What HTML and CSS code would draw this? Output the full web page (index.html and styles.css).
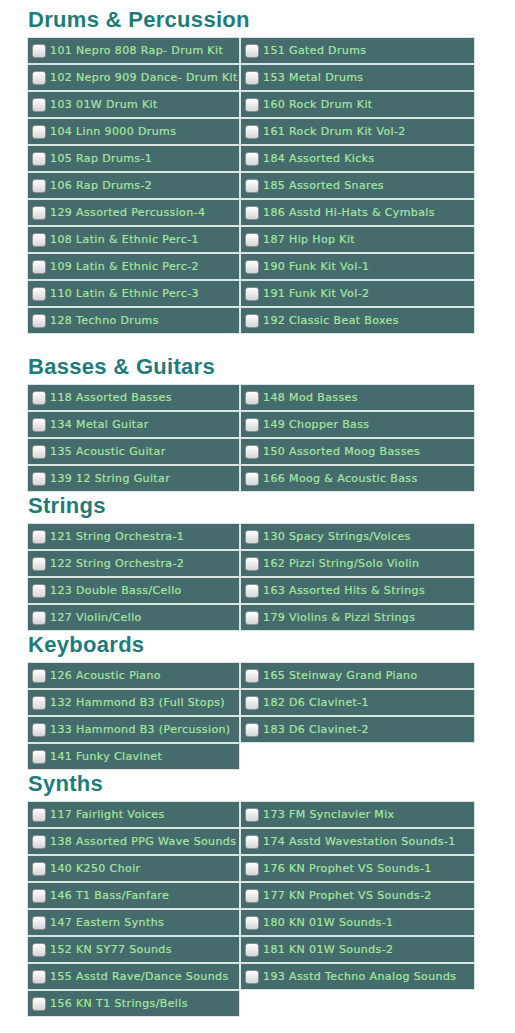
FILE: index.html
```html
<!DOCTYPE html>
<html lang="en">
<head>
<meta charset="utf-8">
<title>Sound Libraries</title>
<link rel="stylesheet" href="styles.css">
</head>
<body>
<div class="page">

<h2 class="cat">Drums &amp; Percussion</h2>
<table class="grid">
<colgroup><col class="col-l"><col class="col-r"></colgroup>
<tr><td><label><input type="checkbox">101 Nepro 808 Rap- Drum Kit</label></td><td><label><input type="checkbox">151 Gated Drums</label></td></tr>
<tr><td><label><input type="checkbox">102 Nepro 909 Dance- Drum Kit</label></td><td><label><input type="checkbox">153 Metal Drums</label></td></tr>
<tr><td><label><input type="checkbox">103 01W Drum Kit</label></td><td><label><input type="checkbox">160 Rock Drum Kit</label></td></tr>
<tr><td><label><input type="checkbox">104 Linn 9000 Drums</label></td><td><label><input type="checkbox">161 Rock Drum Kit Vol-2</label></td></tr>
<tr><td><label><input type="checkbox">105 Rap Drums-1</label></td><td><label><input type="checkbox">184 Assorted Kicks</label></td></tr>
<tr><td><label><input type="checkbox">106 Rap Drums-2</label></td><td><label><input type="checkbox">185 Assorted Snares</label></td></tr>
<tr><td><label><input type="checkbox">129 Assorted Percussion-4</label></td><td><label><input type="checkbox">186 Asstd Hi-Hats &amp; Cymbals</label></td></tr>
<tr><td><label><input type="checkbox">108 Latin &amp; Ethnic Perc-1</label></td><td><label><input type="checkbox">187 Hip Hop Kit</label></td></tr>
<tr><td><label><input type="checkbox">109 Latin &amp; Ethnic Perc-2</label></td><td><label><input type="checkbox">190 Funk Kit Vol-1</label></td></tr>
<tr><td><label><input type="checkbox">110 Latin &amp; Ethnic Perc-3</label></td><td><label><input type="checkbox">191 Funk Kit Vol-2</label></td></tr>
<tr><td><label><input type="checkbox">128 Techno Drums</label></td><td><label><input type="checkbox">192 Classic Beat Boxes</label></td></tr>
</table>

<h2 class="cat cat--spaced">Basses &amp; Guitars</h2>
<table class="grid">
<colgroup><col class="col-l"><col class="col-r"></colgroup>
<tr><td><label><input type="checkbox">118 Assorted Basses</label></td><td><label><input type="checkbox">148 Mod Basses</label></td></tr>
<tr><td><label><input type="checkbox">134 Metal Guitar</label></td><td><label><input type="checkbox">149 Chopper Bass</label></td></tr>
<tr><td><label><input type="checkbox">135 Acoustic Guitar</label></td><td><label><input type="checkbox">150 Assorted Moog Basses</label></td></tr>
<tr><td><label><input type="checkbox">139 12 String Guitar</label></td><td><label><input type="checkbox">166 Moog &amp; Acoustic Bass</label></td></tr>
</table>

<h2 class="cat">Strings</h2>
<table class="grid">
<colgroup><col class="col-l"><col class="col-r"></colgroup>
<tr><td><label><input type="checkbox">121 String Orchestra-1</label></td><td><label><input type="checkbox">130 Spacy Strings/Voices</label></td></tr>
<tr><td><label><input type="checkbox">122 String Orchestra-2</label></td><td><label><input type="checkbox">162 Pizzi String/Solo Violin</label></td></tr>
<tr><td><label><input type="checkbox">123 Double Bass/Cello</label></td><td><label><input type="checkbox">163 Assorted Hits &amp; Strings</label></td></tr>
<tr><td><label><input type="checkbox">127 Violin/Cello</label></td><td><label><input type="checkbox">179 Violins &amp; Pizzi Strings</label></td></tr>
</table>

<h2 class="cat">Keyboards</h2>
<table class="grid">
<colgroup><col class="col-l"><col class="col-r"></colgroup>
<tr><td><label><input type="checkbox">126 Acoustic Piano</label></td><td><label><input type="checkbox">165 Steinway Grand Piano</label></td></tr>
<tr><td><label><input type="checkbox">132 Hammond B3 (Full Stops)</label></td><td><label><input type="checkbox">182 D6 Clavinet-1</label></td></tr>
<tr><td><label><input type="checkbox">133 Hammond B3 (Percussion)</label></td><td><label><input type="checkbox">183 D6 Clavinet-2</label></td></tr>
<tr><td><label><input type="checkbox">141 Funky Clavinet</label></td></tr>
</table>

<h2 class="cat">Synths</h2>
<table class="grid">
<colgroup><col class="col-l"><col class="col-r"></colgroup>
<tr><td><label><input type="checkbox">117 Fairlight Voices</label></td><td><label><input type="checkbox">173 FM Synclavier Mix</label></td></tr>
<tr><td><label><input type="checkbox">138 Assorted PPG Wave Sounds</label></td><td><label><input type="checkbox">174 Asstd Wavestation Sounds-1</label></td></tr>
<tr><td><label><input type="checkbox">140 K250 Choir</label></td><td><label><input type="checkbox">176 KN Prophet VS Sounds-1</label></td></tr>
<tr><td><label><input type="checkbox">146 T1 Bass/Fanfare</label></td><td><label><input type="checkbox">177 KN Prophet VS Sounds-2</label></td></tr>
<tr><td><label><input type="checkbox">147 Eastern Synths</label></td><td><label><input type="checkbox">180 KN 01W Sounds-1</label></td></tr>
<tr><td><label><input type="checkbox">152 KN SY77 Sounds</label></td><td><label><input type="checkbox">181 KN 01W Sounds-2</label></td></tr>
<tr><td><label><input type="checkbox">155 Asstd Rave/Dance Sounds</label></td><td><label><input type="checkbox">193 Asstd Techno Analog Sounds</label></td></tr>
<tr><td><label><input type="checkbox">156 KN T1 Strings/Bells</label></td></tr>
</table>

</div>
</body>
</html>
```

FILE: styles.css
```css
html, body {
  margin: 0;
  padding: 0;
  background: #ffffff;
}

.page {
  padding: 6px 0 0 27px;
}

.cat {
  margin: 0;
  padding: 0 0 3px 1px;
  height: 28px;
  line-height: 28px;
  font-family: "Liberation Sans", Arial, sans-serif;
  font-weight: bold;
  font-size: 22px;
  letter-spacing: 0.3px;
  color: #1f7b7a;
}

.cat--spaced {
  margin-top: 19px;
}

.grid {
  border-collapse: separate;
  border-spacing: 0;
  table-layout: fixed;
  width: 448px;
}

.col-l {
  width: 213px;
}

.col-r {
  width: 235px;
}

.grid td {
  padding: 0 0 0 4px;
  background: #466b6c;
  border: 1px solid #dde4e4;
  box-sizing: border-box;
  height: 27px;
  vertical-align: middle;
  white-space: nowrap;
  overflow: hidden;
}

.grid label {
  display: flex;
  align-items: center;
  gap: 4px;
  font-family: "DejaVu Sans", Verdana, sans-serif;
  font-size: 11px;
  letter-spacing: 0.38px;
  color: #a4e8a0;
  -webkit-text-stroke: 0.2px #a4e8a0;
}

.grid input {
  appearance: none;
  -webkit-appearance: none;
  margin: 0;
  flex: none;
  width: 14px;
  height: 14px;
  border: 1px solid #8a8f92;
  border-radius: 3px;
  background: linear-gradient(#ffffff, #e6e6e6 60%, #d4d4d4);
  box-shadow: inset 0 1px 1px rgba(255,255,255,0.9);
}
```
